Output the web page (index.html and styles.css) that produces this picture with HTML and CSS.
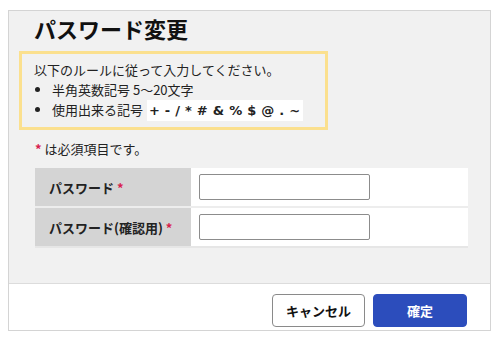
FILE: index.html
```html
<!DOCTYPE html>
<html lang="ja">
<head>
    <meta charset="UTF-8">
    <meta name="viewport" content="width=device-width, initial-scale=1.0">
    <title>パスワード変更</title>
    <link rel="stylesheet" href="styles.css">
</head>
<body>
    <div class="dialog">
        <div class="dialog-body">
            <h1>パスワード変更</h1>
            <div class="rules">
                <p>以下のルールに従って入力してください。</p>
                <ul>
                    <li>半角英数記号 5～20文字</li>
                    <li>使用出来る記号 <span class="symbols">+ - / * # &amp; % $ @ . ~</span></li>
                </ul>
            </div>
            <p class="note"><span class="req">*</span> は必須項目です。</p>
            <table class="form-table">
                <tr>
                    <th>パスワード<span class="req">*</span></th>
                    <td><input type="password" id="password"></td>
                </tr>
                <tr>
                    <th>パスワード(確認用)<span class="req">*</span></th>
                    <td><input type="password" id="passwordConfirm"></td>
                </tr>
            </table>
        </div>
        <div class="dialog-footer">
            <button class="btn btn-cancel">キャンセル</button>
            <button class="btn btn-ok">確定</button>
        </div>
    </div>
</body>
</html>
```

FILE: styles.css
```css
body { margin: 0; background: #fff; font-family: "Noto Sans CJK JP", "Noto Sans", sans-serif; color: #222; font-size: 13px; }
.dialog { margin: 10px 0 0 8px; width: 481px; height: 319px; border: 1px solid #d4d4d4; display: flex; flex-direction: column; }
.dialog-body { background: #f1f1f1; height: 272px; padding: 0 0 0 10px; border-bottom: 1px solid #dcdcdc; }
.dialog-body h1 { margin: 0; padding: 2px 0 0 15px; font-size: 22px; line-height: 30px; font-weight: bold; color: #111; }
.rules { margin-top: 8px; border: 3px solid #fbe08e; padding: 0 0 0 12px; box-sizing: border-box; width: 309px; height: 79px; }
.rules p { margin: 0; padding-top: 6px; line-height: 20px; }
.rules ul { margin: 0; padding: 0 0 0 18px; line-height: 20px; }
.rules li { margin: 0; }
.symbols { display: inline-block; background: #fff; font-family: "DejaVu Sans", sans-serif; font-weight: bold; font-size: 13px; line-height: 21px; padding: 0 3px 0 2px; word-spacing: 0.5px; margin-left: 1px; }
.note { margin: 8px 0 0 16px; line-height: 22px; }
.req { color: #d8214d; font-weight: bold; }
th .req { margin-left: 3px; }
.form-table { margin: 8px 0 0 16px; width: 433px; border-collapse: collapse; }
.form-table th { width: 142px; background: #d4d4d4; text-align: left; padding: 0 0 0 14px; font-weight: bold; height: 38px; border-bottom: 2px solid #e6e6e6; }
.form-table td { background: #fff; padding: 0 0 0 8px; height: 38px; border-bottom: 2px solid #e6e6e6; }
.form-table tr:first-child th, .form-table tr:first-child td { border-bottom-color: #ededed; }
.form-table input { width: 171px; height: 26px; box-sizing: border-box; border: 1px solid #8c8c8c; border-radius: 2px; display: block; }
.dialog-footer { flex: 1; background: #fff; display: flex; justify-content: flex-end; align-items: flex-start; gap: 8px; padding: 10px 23px 0 0; }
.btn { height: 33px; border-radius: 4px; font-family: inherit; font-size: 13px; font-weight: bold; cursor: pointer; }
.btn-cancel { width: 93px; background: #fff; border: 1px solid #8a8a8a; color: #111; }
.btn-ok { width: 94px; background: #2c4dbc; border: 1px solid #2c4dbc; color: #fff; }
```
